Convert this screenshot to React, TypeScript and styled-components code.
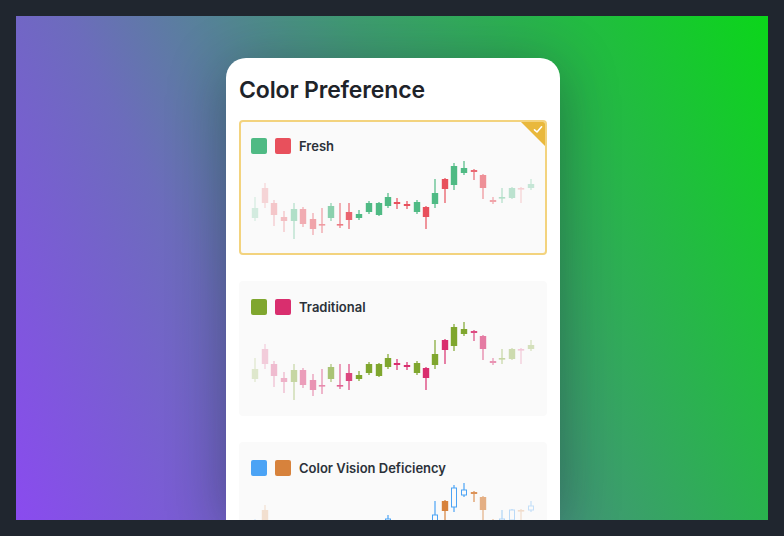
import React from "react";
import styled, { createGlobalStyle } from "styled-components";

const Global = createGlobalStyle`
  html, body { margin: 0; padding: 0; background: #20262f; }
  body { font-family: "Inter", "Noto Sans", sans-serif; }
`;

const Frame = styled.div`
  box-sizing: border-box;
  width: 784px;
  height: 536px;
  padding: 16px;
  background: #20262f;
`;

const Stage = styled.div`
  height: 504px;
  overflow: hidden;
  display: flex;
  justify-content: center;
  padding: 42px 0 0 2px;
  box-sizing: border-box;
  background: linear-gradient(64deg, #8a4bef 0%, #6c6cbc 30%, #3f9a72 58%, #0bd61a 100%);
`;

const Panel = styled.div`
  width: 334px;
  flex-shrink: 0;
  box-sizing: border-box;
  background: #ffffff;
  border-radius: 20px 20px 0 0;
  padding: 18px 13px 0;
  box-shadow: 0 10px 56px rgba(16, 28, 36, 0.38);
  display: flex;
  flex-direction: column;
`;

const Title = styled.h1`
  margin: 0 0 16px;
  font-size: 23px;
  line-height: 28px;
  font-weight: 600;
  color: #1e2329;
  letter-spacing: -0.15px;
`;

const OptionList = styled.div`
  display: flex;
  flex-direction: column;
  gap: 26px;
`;

const Option = styled.div<{ $selected?: boolean }>`
  position: relative;
  box-sizing: border-box;
  height: 135px;
  flex-shrink: 0;
  border: 2px solid ${(p) => (p.$selected ? "#f3d37e" : "transparent")};
  border-radius: 4px;
  background: #fafafa;
  padding: 16px 10px 0;
  overflow: hidden;
`;

const OptionHeader = styled.div`
  display: flex;
  align-items: center;
  gap: 8px;
  height: 16px;
`;

const Swatch = styled.span<{ $color: string }>`
  width: 16px;
  height: 16px;
  border-radius: 2px;
  background: ${(p) => p.$color};
  flex-shrink: 0;
`;

const Label = styled.span`
  font-size: 13px;
  font-weight: 600;
  color: #2b3139;
  line-height: 16px;
`;

const Chart = styled.svg`
  display: block;
  margin-top: 4px;
  overflow: visible;
`;

const Corner = styled.div`
  position: absolute;
  top: 0;
  right: 0;
  width: 24px;
  height: 24px;
  background: #e9b83c;
  clip-path: polygon(0 0, 100% 0, 100% 100%);
`;

const CornerCheck = styled.svg`
  position: absolute;
  top: 3px;
  right: 2px;
`;

type Candle = [number, number, number, number, number, boolean];

// [x, bodyTop, bodyBottom, wickTop, wickBottom, up]
const CANDLES: Candle[] = [
  [255, 208, 218, 197, 221, true],
  [265, 188, 203, 183, 208, false],
  [274, 203, 215, 200, 226, false],
  [284, 217, 221, 211, 232, false],
  [294, 209, 221, 203, 239, true],
  [303, 209, 224, 207, 227, false],
  [313, 219, 229, 213, 235, false],
  [322, 224, 225.5, 208, 233, false],
  [331, 206, 218, 203, 221, true],
  [340, 224, 225.5, 203, 228, false],
  [349, 212, 220, 203, 229, false],
  [359, 214, 218, 210, 220, true],
  [369, 203, 212, 201, 214, true],
  [379, 203, 215, 202, 216, true],
  [388, 197, 206, 193, 208, true],
  [397, 202, 204, 198, 209, false],
  [407, 204, 206, 201, 209, false],
  [417, 202, 212, 200, 214, true],
  [426, 207, 217, 206, 229, false],
  [435, 193, 204, 179, 208, true],
  [445, 179, 189, 178, 203, false],
  [454, 166, 185, 163, 190, true],
  [464, 168, 173, 161, 175, true],
  [474, 170, 172, 169, 180, false],
  [483, 175, 188, 174, 199, false],
  [493, 200, 202, 197, 204, false],
  [502, 197, 198.5, 188, 203, true],
  [512, 188, 198, 187, 199, true],
  [521, 188, 189.5, 187, 203, false],
  [531, 184, 188, 179, 190, true],
];

const OPACITY = [
  0.22, 0.22, 0.3, 0.35, 0.42, 0.45, 0.5, 0.55, 0.65, 0.75, 0.88, 1, 1, 1, 1,
  1, 1, 1, 1, 1, 1, 1, 1, 0.85, 0.62, 0.5, 0.42, 0.36, 0.24, 0.3,
];

const X0 = 251;
const Y0 = 158;

type Scheme = {
  name: string;
  up: string;
  down: string;
  hollowUp?: boolean;
};

const SCHEMES: Scheme[] = [
  { name: "Fresh", up: "#4fba84", down: "#e8505c" },
  { name: "Traditional", up: "#7fa62e", down: "#d92e6e" },
  { name: "Color Vision Deficiency", up: "#4ba3f5", down: "#d7823c", hollowUp: true },
];

function CandleChart({ scheme }: { scheme: Scheme }) {
  return (
    <Chart width={284} height={84} viewBox="0 0 284 84">
      {CANDLES.map(([x, bt, bb, wt, wb, up], i) => {
        const color = up ? scheme.up : scheme.down;
        const cx = x - X0;
        const hollow = up && scheme.hollowUp;
        return (
          <g key={i} opacity={OPACITY[i]}>
            <line x1={cx} x2={cx} y1={wt - Y0} y2={wb - Y0} stroke={color} strokeWidth={1.2} />
            {hollow ? (
              <rect
                x={cx - 2.5}
                y={bt - Y0}
                width={5}
                height={Math.max(bb - bt, 1.5)}
                fill="#fafafa"
                stroke={color}
                strokeWidth={1}
              />
            ) : (
              <rect x={cx - 3.2} y={bt - Y0} width={6.4} height={Math.max(bb - bt, 1.6)} fill={color} />
            )}
          </g>
        );
      })}
    </Chart>
  );
}

export default function App() {
  return (
    <>
      <Global />
      <Frame>
        <Stage>
          <Panel>
            <Title>Color Preference</Title>
            <OptionList>
              {SCHEMES.map((s, i) => (
                <Option key={s.name} $selected={i === 0}>
                  <OptionHeader>
                    <Swatch $color={s.up} />
                    <Swatch $color={s.down} />
                    <Label>{s.name}</Label>
                  </OptionHeader>
                  <CandleChart scheme={s} />
                  {i === 0 && (
                    <>
                      <Corner />
                      <CornerCheck width={10} height={9} viewBox="0 0 10 9">
                        <path d="M1.5 4.8 L4 7 L8.6 1.8" fill="none" stroke="#ffffff" strokeWidth={1.6} strokeLinecap="round" strokeLinejoin="round" />
                      </CornerCheck>
                    </>
                  )}
                </Option>
              ))}
            </OptionList>
          </Panel>
        </Stage>
      </Frame>
    </>
  );
}
